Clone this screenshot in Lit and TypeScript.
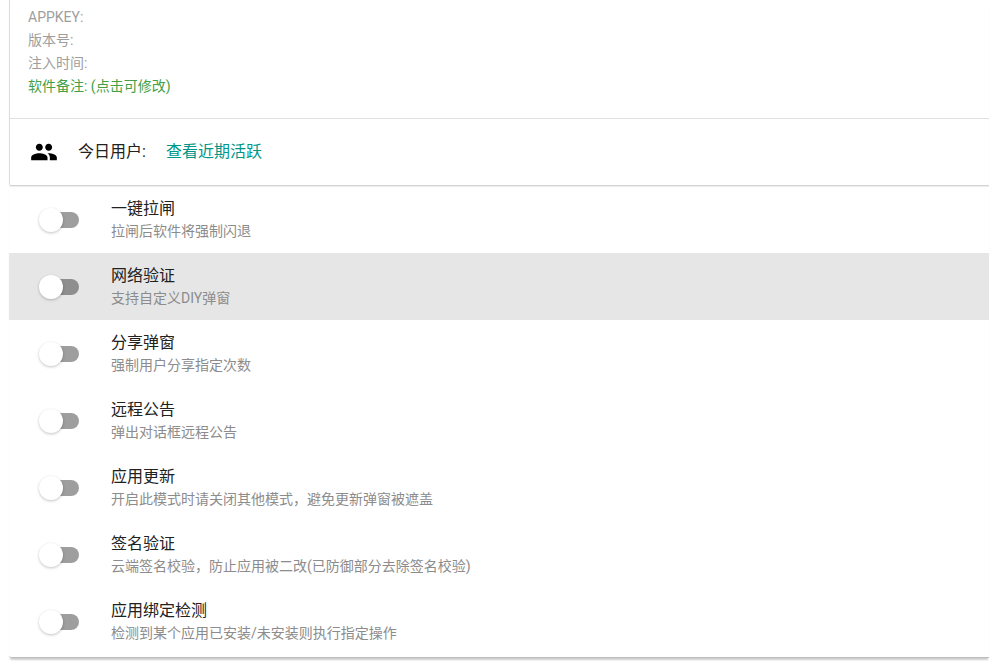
import { LitElement, html, css } from "lit";
import { customElement, property, state } from "lit/decorators.js";

interface Option {
  title: string;
  note: string;
}

const OPTIONS: Option[] = [
  { title: "一键拉闸", note: "拉闸后软件将强制闪退" },
  { title: "网络验证", note: "支持自定义DIY弹窗" },
  { title: "分享弹窗", note: "强制用户分享指定次数" },
  { title: "远程公告", note: "弹出对话框远程公告" },
  { title: "应用更新", note: "开启此模式时请关闭其他模式，避免更新弹窗被遮盖" },
  { title: "签名验证", note: "云端签名校验，防止应用被二改(已防御部分去除签名校验)" },
  { title: "应用绑定检测", note: "检测到某个应用已安装/未安装则执行指定操作" },
];

@customElement("switch-row")
export class SwitchRow extends LitElement {
  @property() heading = "";
  @property() note = "";
  @state() private on = false;

  static styles = css`
    :host {
      display: block;
    }
    .row {
      display: flex;
      align-items: center;
      gap: 32px;
      box-sizing: border-box;
      height: 100%;
      padding: 0 16px 0 30px;
      cursor: pointer;
    }
    .switch {
      appearance: none;
      display: flex;
      align-items: center;
      flex: none;
      width: 36px;
      height: 16px;
      margin: 0 0 0 4px;
      border-radius: 8px;
      background: rgba(0, 0, 0, 0.38);
      cursor: pointer;
    }
    .switch::before {
      content: "";
      flex: none;
      width: 24px;
      height: 24px;
      margin-left: -4px;
      border-radius: 50%;
      background: #fff;
      box-shadow: 0 1px 3px rgba(0, 0, 0, 0.24);
      transition: margin-left 0.2s;
    }
    .switch:checked {
      background: rgba(0, 150, 136, 0.5);
    }
    .switch:checked::before {
      margin-left: 16px;
      background: #009688;
    }
    .text {
      display: flex;
      flex-direction: column;
    }
    .title {
      font-size: 16px;
      line-height: 23px;
      color: #212121;
    }
    .note {
      font-size: 14px;
      line-height: 22px;
      color: #8c8c8c;
    }
  `;

  render() {
    return html`
      <label class="row">
        <input
          class="switch"
          type="checkbox"
          role="switch"
          .checked=${this.on}
          @change=${(e: Event) => (this.on = (e.target as HTMLInputElement).checked)}
        />
        <span class="text">
          <span class="title">${this.heading}</span>
          <span class="note">${this.note}</span>
        </span>
      </label>
    `;
  }
}

@customElement("app-root")
export class AppRoot extends LitElement {
  static styles = css`
    :host {
      display: block;
      padding: 0 14px 8px 9px;
      overflow: hidden;
      background: #fff;
      color: #212121;
      font-family: Roboto, "Noto Sans CJK SC", sans-serif;
    }
    .card {
      border-left: 1px solid #dcdcdc;
      border-bottom: 1px solid #d4d4d4;
      border-radius: 0 0 0 2px;
      box-shadow: 0 1px 1px rgba(0, 0, 0, 0.08);
    }
    .info {
      margin: 0;
      padding: 6px 18px 20px;
      list-style: none;
      font-size: 14px;
      line-height: 23px;
      color: #9e9e9e;
      border-bottom: 1px solid #e0e0e0;
    }
    .remark {
      padding: 0;
      border: 0;
      background: none;
      font: inherit;
      color: #43a047;
      cursor: pointer;
    }
    .today {
      display: flex;
      align-items: center;
      height: 66px;
      padding: 0 20px;
      font-size: 16px;
      line-height: 24px;
    }
    .people {
      width: 28px;
      height: 28px;
      margin-right: 20px;
      fill: #000;
    }
    .link {
      margin-left: 20px;
      color: #009688;
      text-decoration: none;
    }
    .options {
      display: grid;
      grid-auto-rows: 67px;
      padding-bottom: 2px;
      border-bottom: 1px solid #bdbdbd;
      border-radius: 0 0 0 3px;
      box-shadow: 0 3px 2px -1px rgba(0, 0, 0, 0.2);
    }
    .active {
      background: #e6e6e6;
    }
  `;

  render() {
    return html`
      <section class="card">
        <ul class="info">
          <li>APPKEY:</li>
          <li>版本号:</li>
          <li>注入时间:</li>
          <li><button class="remark" type="button">软件备注: (点击可修改)</button></li>
        </ul>
        <div class="today">
          <svg class="people" viewBox="0 0 24 24" aria-hidden="true">
            <path
              d="M16 11c1.66 0 2.99-1.34 2.99-3S17.66 5 16 5s-3 1.34-3 3 1.34 3 3 3zm-8 0c1.66 0 2.99-1.34 2.99-3S9.66 5 8 5 5 6.34 5 8s1.34 3 3 3zm0 2c-2.33 0-7 1.17-7 3.5V19h14v-2.5C15 14.17 10.33 13 8 13zm8 0c-.29 0-.62.02-.97.05 1.16.84 1.97 1.97 1.97 3.45V19h6v-2.5c0-2.33-4.67-3.5-7-3.5z"
            />
          </svg>
          <span>今日用户:</span>
          <a class="link" href="#active">查看近期活跃</a>
        </div>
      </section>
      <section class="options">
        ${OPTIONS.map(
          (o, i) => html`<switch-row
            class=${i === 1 ? "active" : ""}
            .heading=${o.title}
            .note=${o.note}
          ></switch-row>`
        )}
      </section>
    `;
  }
}
